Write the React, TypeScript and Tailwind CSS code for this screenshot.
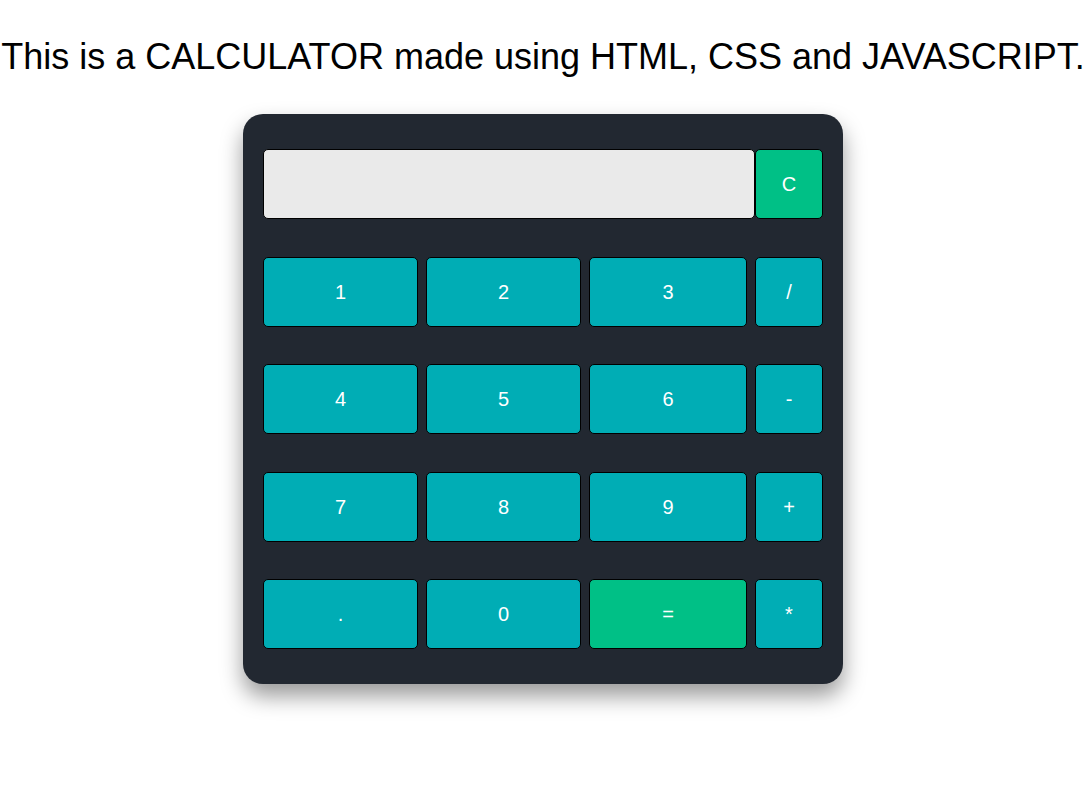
import React, { useState } from "react";

const keys: { label: string; wide: "a" | "b" | "c" | "d"; green?: boolean }[][] = [
  [
    { label: "1", wide: "a" },
    { label: "2", wide: "b" },
    { label: "3", wide: "c" },
    { label: "/", wide: "d" },
  ],
  [
    { label: "4", wide: "a" },
    { label: "5", wide: "b" },
    { label: "6", wide: "c" },
    { label: "-", wide: "d" },
  ],
  [
    { label: "7", wide: "a" },
    { label: "8", wide: "b" },
    { label: "9", wide: "c" },
    { label: "+", wide: "d" },
  ],
  [
    { label: ".", wide: "a" },
    { label: "0", wide: "b" },
    { label: "=", wide: "c", green: true },
    { label: "*", wide: "d" },
  ],
];

const widthClass = {
  a: "w-[155px]",
  b: "w-[155px]",
  c: "w-[158px]",
  d: "w-[68px]",
};

export default function App() {
  const [value, setValue] = useState("");

  const press = (label: string) => {
    if (label === "=") {
      try {
        // eslint-disable-next-line no-new-func
        setValue(String(Function(`return (${value})`)()));
      } catch {
        setValue("Error");
      }
      return;
    }
    setValue((v) => v + label);
  };

  return (
    <div className="min-h-screen bg-white font-['Liberation_Sans',Arial,sans-serif]">
      <div className="w-[1086px] flex flex-col items-center pt-[36px]">
        <h1 className="text-[36px] leading-[41px] font-normal text-black whitespace-nowrap">
          This is a CALCULATOR made using HTML, CSS and JAVASCRIPT.
        </h1>

        <div className="mt-[37px] w-[600px] h-[570px] rounded-[20px] bg-[#222831] px-[20px] py-[35px] shadow-[0_12px_22px_rgba(0,0,0,0.4)] flex flex-col gap-[37.5px]">
          {/* Display + clear */}
          <div className="flex h-[70px]">
            <input
              readOnly
              value={value}
              className="w-[492px] h-[70px] rounded-[5px] border border-black bg-[#eaeaea] px-3 text-[24px] text-black outline-none"
            />
            <button
              onClick={() => setValue("")}
              className="w-[68px] h-[70px] rounded-[5px] border border-black bg-[#00c086] text-white text-[20px]"
            >
              C
            </button>
          </div>

          {keys.map((row, i) => (
            <div key={i} className="flex gap-[8px] h-[70px]">
              {row.map((k) => (
                <button
                  key={k.label}
                  onClick={() => press(k.label)}
                  className={`${widthClass[k.wide]} h-[70px] rounded-[5px] border border-black text-white text-[20px] ${
                    k.green ? "bg-[#00c086]" : "bg-[#00adb5]"
                  }`}
                >
                  {k.label}
                </button>
              ))}
            </div>
          ))}
        </div>
      </div>
    </div>
  );
}
